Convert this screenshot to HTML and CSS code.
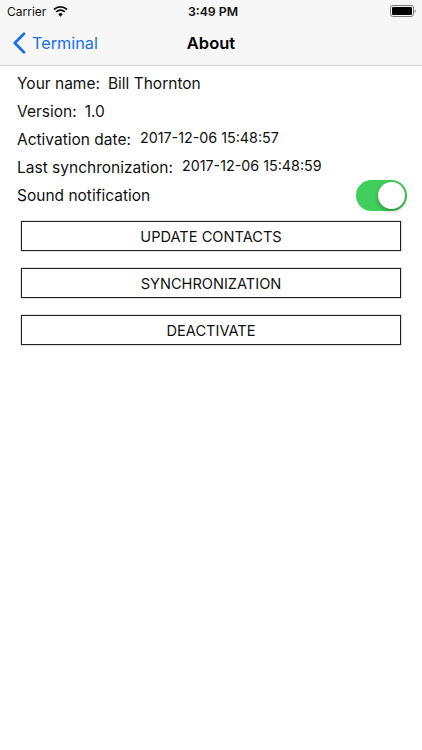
FILE: index.html
```html
<!DOCTYPE html>
<html lang="en">
<head>
<meta charset="utf-8">
<title>About</title>
<link rel="stylesheet" href="styles.css">
</head>
<body>
<header class="bar">
  <div class="status">
    <div class="status-left">
      <span>Carrier</span>
      <svg class="wifi" width="15" height="11" viewBox="0 0 16 12"><path d="M8 11.6 5.6 8.9a3.4 3.4 0 0 1 4.8 0z" fill="#111"/><path d="M3.9 7.1a5.8 5.8 0 0 1 8.2 0l1.2-1.4a7.7 7.7 0 0 0-10.6 0z" fill="#111"/><path d="M1.5 4.5a9.3 9.3 0 0 1 13 0l1.2-1.4a11.2 11.2 0 0 0-15.4 0z" fill="#111"/></svg>
    </div>
    <span class="clock">3:49 PM</span>
    <div class="status-right">
      <svg width="26" height="12" viewBox="0 0 26 12"><rect x="0.5" y="0.5" width="23" height="11" rx="2.6" fill="none" stroke="#777"/><rect x="2" y="2" width="20" height="8" rx="1.2" fill="#000"/><rect x="24.4" y="4.4" width="1.3" height="3.2" rx=".6" fill="#999"/></svg>
    </div>
  </div>
  <nav class="nav">
    <a class="back">
      <svg width="14" height="22" viewBox="0 0 14 22"><path d="M12 1.8 2.8 11l9.2 9.2" fill="none" stroke="#1a6fe8" stroke-width="2.8" stroke-linecap="round" stroke-linejoin="round"/></svg>
      <span>Terminal</span>
    </a>
    <h1 class="title">About</h1>
  </nav>
</header>
<main class="content">
  <div class="row"><span>Your name:</span><span>Bill Thornton</span></div>
  <div class="row"><span>Version:</span><span>1.0</span></div>
  <div class="row"><span>Activation date:</span><span class="stamp">2017-12-06 15:48:57</span></div>
  <div class="row"><span>Last synchronization:</span><span class="stamp">2017-12-06 15:48:59</span></div>
  <div class="row row-sound"><span>Sound notification</span><span class="switch"><span class="knob"></span></span></div>
  <div class="actions">
    <button class="action">UPDATE CONTACTS</button>
    <button class="action">SYNCHRONIZATION</button>
    <button class="action">DEACTIVATE</button>
  </div>
</main>
</body>
</html>
```
FILE: styles.css
```css
* { box-sizing: border-box; }
html, body { margin: 0; padding: 0; }
body { width: 422px; height: 750px; background: #fff; color: #111; font-family: Inter, "Liberation Sans", sans-serif; overflow: hidden; }
.bar { background: #f7f7f7; border-bottom: 1px solid #d4d4d4; height: 66px; }
.status { position: relative; display: flex; justify-content: space-between; align-items: center; height: 22px; padding: 0 6px 0 7px; font-size: 12px; }
.status-left { display: flex; align-items: center; gap: 7px; }
.wifi { display: block; }
.status-right { display: flex; align-items: center; }
.status-right svg { display: block; }
.clock { position: absolute; left: 4px; right: 0; text-align: center; font-weight: 600; font-size: 12.3px; }
.nav { position: relative; display: flex; align-items: center; height: 43px; padding: 0 0 2px 12px; }
.back { display: flex; align-items: center; gap: 6px; color: #1a6fe8; font-size: 16.25px; }
.back svg { display: block; }
.title { position: absolute; left: 0; right: 0; margin: 0; text-align: center; font-size: 16.5px; font-weight: 600; color: #000; }
.content { display: flex; flex-direction: column; padding: 3px 15px 0 17px; }
.row { display: flex; align-items: center; gap: 8px; height: 28px; font-size: 15.5px; }
.stamp { font-size: 14.3px; position: relative; top: -2px; margin-left: 1px; }
.row-sound { justify-content: space-between; }
.switch { display: block; width: 51px; height: 31px; border-radius: 16px; background: #3fcf5a; padding: 2px 2px 2px 22px; }
.knob { display: block; width: 27px; height: 27px; border-radius: 50%; background: #fff; box-shadow: 0 2px 4px rgba(0,0,0,.3); }
.actions { display: flex; flex-direction: column; gap: 17px; padding: 12px 6px 0 4px; }
.action { display: block; width: 100%; height: 30px; padding: 1px 0 0; background: #fff; border: 1px solid #222; box-shadow: 0 0 1px #444; border-radius: 0; color: #111; font: inherit; font-size: 14.6px; }
```
